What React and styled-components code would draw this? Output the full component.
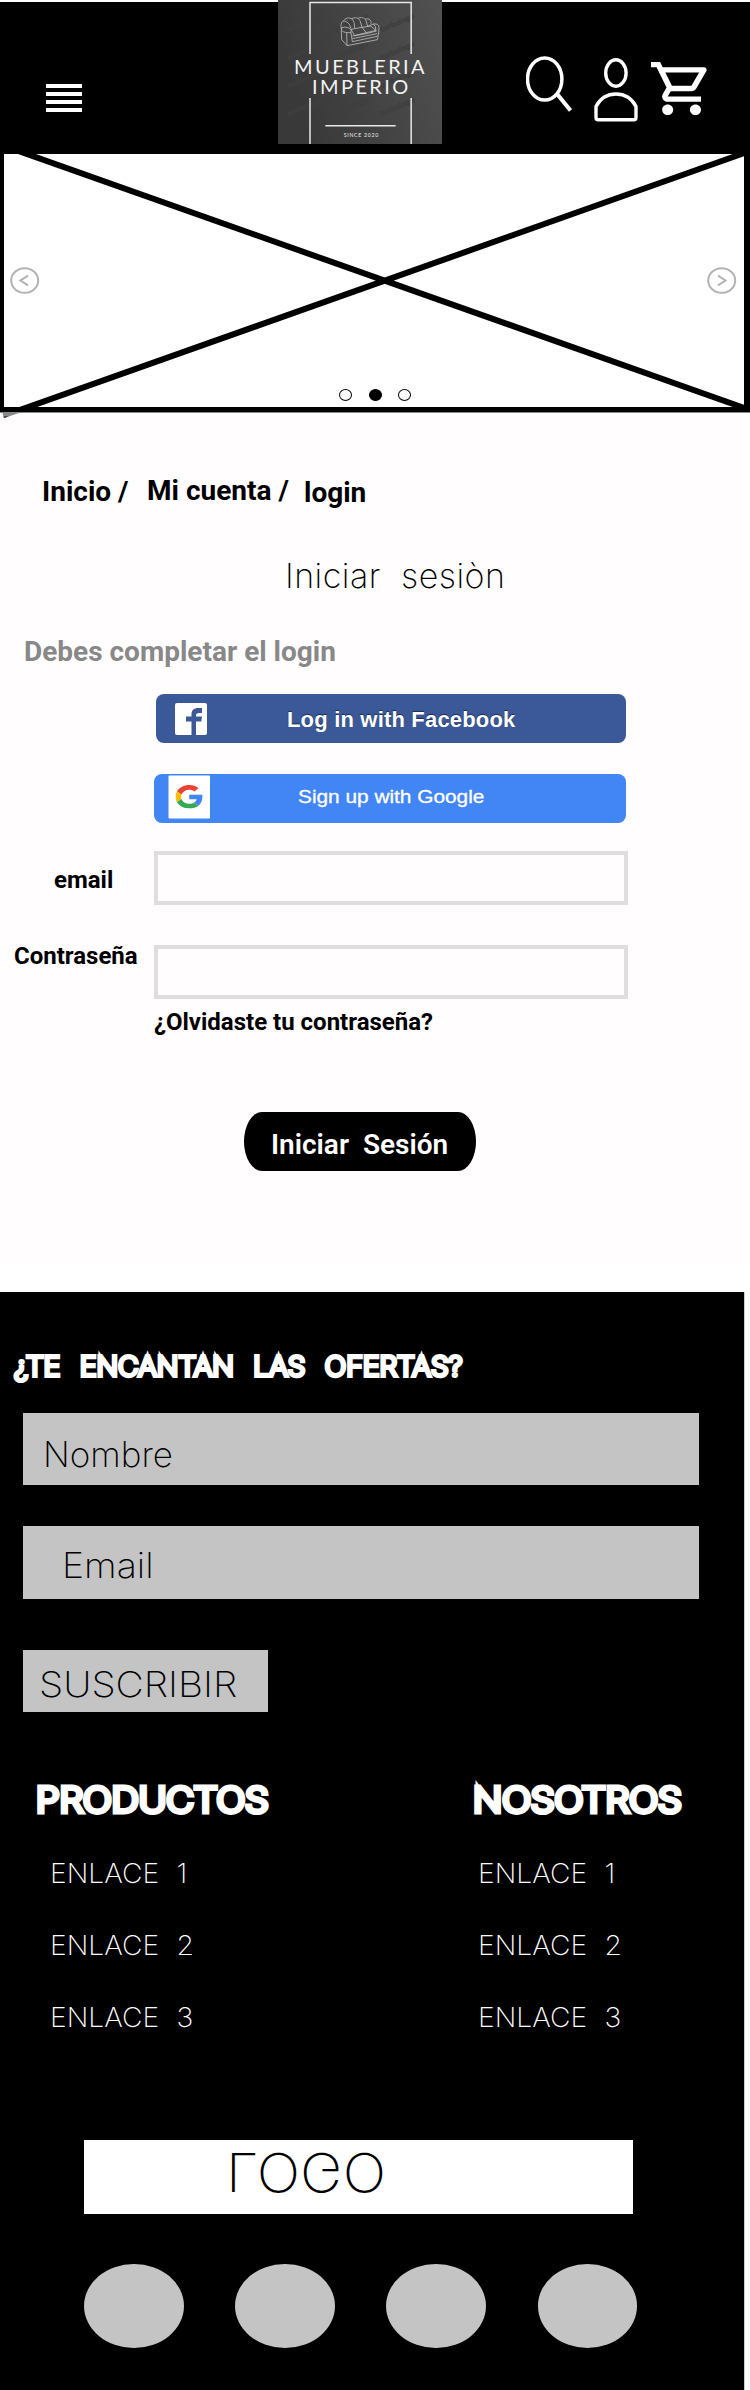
import React from 'react';
import styled, { createGlobalStyle } from 'styled-components';

const GlobalStyle = createGlobalStyle`
  * { box-sizing: border-box; }
  body { margin: 0; background: #fff; }
  button, input { font: inherit; }
`;

const thin = `font-family: Inter, "Liberation Sans", sans-serif; font-weight: 200;`;
const bold = `font-family: Roboto, "Liberation Sans", sans-serif; font-weight: 700;`;

const Page = styled.div`
  width: 750px;
  height: 2390px;
  overflow: hidden;
  color: #000;
  white-space: pre;
`;

/* ---------- header ---------- */
const Header = styled.header`
  display: flex;
  align-items: flex-start;
  height: 154px;
  padding-left: 46px;
  background: linear-gradient(#fff 2px, #000 2px);
`;
const MenuButton = styled.div`
  display: flex;
  flex-direction: column;
  gap: 4px;
  width: 36px;
  margin: 84px 196px 0 0;
`;
const MenuBar = styled.span`
  height: 4px;
  background: #fff;
`;
const Brand = styled.div`
  width: 164px;
  height: 144px;
  margin-right: 84px;
  svg { display: block; }
`;
const Actions = styled.div`
  display: flex;
  align-items: flex-start;
`;
const ActionIcon = styled.svg`
  display: block;
  margin-top: ${(p) => p.$top}px;
  margin-right: ${(p) => p.$gap || 0}px;
`;

/* ---------- carousel ---------- */
const Carousel = styled.section`
  position: relative;
  display: flex;
  flex-direction: column;
  height: 258px;
  border: solid #000;
  border-width: 0 6px 5px 4px;
  background: #fff;
`;
const Cross = styled.svg`
  position: absolute;
  inset: 0;
`;
const CornerShade = styled.svg`
  position: absolute;
  left: -2px;
  top: 259px;
`;
const Arrows = styled.div`
  position: relative;
  display: flex;
  justify-content: space-between;
  padding: 113px 7px 0 6px;
  svg { display: block; }
`;
const Dots = styled.div`
  position: relative;
  display: flex;
  justify-content: center;
  gap: 16.5px;
  padding: 95px 0 0 2px;
`;
const Dot = styled.span`
  width: 13px;
  height: 12px;
  border: 1px solid #000;
  border-radius: 50%;
  background: ${(p) => (p.$active ? '#000' : '#fff')};
`;

/* ---------- login ---------- */
const Main = styled.main`
  height: 850px;
  padding-top: 63px;
  border-top: 1px solid #888;
  background: #fffdfe;
  ${bold}
`;
const Breadcrumb = styled.nav`
  display: grid;
  grid-template-columns: 105px 157px auto;
  padding-left: 42px;
  font-size: 28px;
  line-height: 32px;
`;
const Crumb = styled.span`
  transform: translateY(${(p) => p.$shift || 0}px);
`;
const Title = styled.h1`
  ${thin}
  margin: 48px 0 0 285px;
  font-size: 34px;
  line-height: 40px;
  letter-spacing: 0.5px;
`;
const Hint = styled.p`
  margin: 40px 0 0 24px;
  color: #888;
  font-size: 28px;
  line-height: 32px;
`;
const SocialButton = styled.div`
  display: flex;
  width: ${(p) => (p.$google ? 472 : 470)}px;
  height: 49px;
  margin: ${(p) => (p.$google ? '31px 0 0 154px' : '26px 0 0 156px')};
  padding-left: ${(p) => (p.$google ? 14 : 19)}px;
  border-radius: 8px;
  background: ${(p) => (p.$google ? '#4285f4' : '#3b5998')};
  color: #fff;
  line-height: 49px;
  svg { display: block; flex: none; }
`;
const FacebookLabel = styled.span`
  margin: 1px 0 0 80px;
  font: 700 22px/49px "Liberation Sans", sans-serif;
  letter-spacing: 0.18px;
  text-shadow: 0 -1px 1px #1d2c50;
`;
const GoogleLabel = styled.span`
  margin: -1px 0 0 87px;
  font: 400 17.5px/49px "Liberation Sans", sans-serif;
  transform: scaleX(1.19);
  transform-origin: left;
  -webkit-text-stroke: 0.3px #fff;
`;
const Field = styled.label`
  display: grid;
  grid-template-columns: 154px 474px;
  margin-top: ${(p) => p.$gap}px;
  font-size: 24px;
  line-height: 28px;
`;
const FieldName = styled.span`
  padding-left: ${(p) => p.$indent}px;
  transform: translateY(${(p) => p.$shift}px);
`;
const FieldInput = styled.input`
  width: 474px;
  height: 54px;
  border: 4px solid #dedede;
  background: #fffdfe;
`;
const Forgot = styled.p`
  margin: 9px 0 0 154px;
  font-size: 24px;
  line-height: 28px;
`;
const Submit = styled.div`
  width: 232px;
  height: 59px;
  margin: 76px 0 0 244px;
  padding: 3px 0 0 27px;
  border-radius: 18px / 29.5px;
  background: #000;
  color: #fff;
  font-size: 28px;
  font-weight: 600;
  line-height: 59px;
`;

/* ---------- footer ---------- */
const Footer = styled.footer`
  ${thin}
  width: 745px;
  height: 1098px;
  margin-top: 30px;
  padding-top: 55px;
  border-right: 1px solid #ccc;
  background: #000;
  color: #fff;
`;
const Wide = styled.span`
  display: inline-block;
  transform: scaleX(${(p) => p.$by});
  transform-origin: left;
`;
const OffersTitle = styled.h2`
  margin: 0 0 26px 14px;
  font-size: 27px;
  font-weight: 200;
  line-height: 40px;
  word-spacing: 1.7px;
  -webkit-text-stroke: 4px #fff;
`;
const GreyBox = styled.div`
  width: ${(p) => p.$width}px;
  height: ${(p) => p.$height}px;
  margin: 0 0 ${(p) => p.$after}px 22.5px;
  padding: ${(p) => p.$pad};
  background: #c4c4c4;
  color: #000;
  font-size: 35px;
  line-height: ${(p) => p.$height}px;
`;
const Columns = styled.div`
  display: grid;
  grid-template-columns: 437px auto;
  padding-left: 36px;
`;
const ColumnTitle = styled.h3`
  margin: 0 0 15.5px;
  font-size: 34px;
  font-weight: 200;
  line-height: 44px;
  -webkit-text-stroke: 5px #fff;
`;
const FooterLink = styled.div`
  padding-left: ${(p) => p.$indent}px;
  font-size: 27px;
  line-height: 72px;
  word-spacing: 0.8px;
`;
const LogoBox = styled.div`
  width: 549px;
  height: 73.5px;
  margin: 86.5px 0 50.5px 84px;
  padding-left: 142px;
  background: #fff;
  color: #000;
`;
const FlippedText = styled.div`
  width: 200px;
  font-size: 54px;
  line-height: 73.5px;
  transform: translateY(-4.5px) scale(1.065, -1);
  transform-origin: left;
`;
const Circles = styled.div`
  display: flex;
  gap: 51.7px;
  padding-left: 84px;
`;
const Circle = styled.span`
  width: 99.5px;
  height: 84px;
  border-radius: 50%;
  background: #c4c4c4;
`;

const marks = [];
for (let row = 0; row < 4; row += 1) {
  for (let col = 0; col < 3; col += 1) marks.push([56 + col * 139, 92 + row * 84]);
}

const BrandLogo = () => (
  <svg width="164" height="144" viewBox="24 0 492 432">
    <defs>
      <linearGradient id="slate" x1="0" y1="0.3" x2="1" y2="0">
        <stop offset="0" stopColor="#393939" />
        <stop offset="1" stopColor="#515151" />
      </linearGradient>
    </defs>
    <rect x="24" width="492" height="432" fill="url(#slate)" />
    <g fill="#464646" stroke="#3c3c3c" strokeWidth="1.5" fontFamily="DejaVu Sans" fontWeight="700" fontSize="20">
      {marks.map(([x, y]) => (
        <text key={`${x}-${y}`} transform={`translate(${x} ${y + 5}) rotate(-24)`} textLength="110">turbologo</text>
      ))}
    </g>
    <g fill="none" stroke="#e8e8e8" strokeWidth="4.5">
      <path d="M120 162V7.500H423.500V162M120 294V432M423.500 294V432M166 377H377" />
    </g>
    <g fill="none" stroke="#c9c9c9" strokeWidth="2.200" strokeLinejoin="round">
      <path d="M214 91L215 119L231 137L322 119L326 99M214 91Q213 80 224 81L238 84Q246 89 243 98L230 98Q218 96 214 91M230 98L231 137M243 98L247 125L322 109M247 116L321 101M247 108L288 101L320 93" />
      <path d="M214 88C210 65 219 58 232 67Q239 71 243 85M221 62C229 50 243 53 249 60Q254 67 254 84M245 56C257 50 267 55 270 62L276 82M265 54C278 50 287 56 288 62L293 79M286 57C298 54 305 62 303 71M293 79L310 72Q327 70 327 82L326 100M310 72Q318 77 318 91M243 88L276 82L289 98L254 107ZM276 82L302 78L318 91L289 98" />
    </g>
    <g fill="#f2f2f2" fontFamily="Lato" textAnchor="start">
      <text x="72" y="221" fontSize="60" textLength="392">MUEBLERIA</text>
      <text x="126" y="283" fontSize="60" textLength="289">IMPERIO</text>
      <text x="221" y="411" fontSize="15.500" textLength="104">SINCE 2020</text>
    </g>
  </svg>
);

const ArrowIcon = ({ flip }) => (
  <svg width="30" height="27" viewBox="0 0 30 27" fill="none" stroke="#b3b3b3" strokeWidth="2">
    <ellipse cx="14.700" cy="13.500" rx="13.500" ry="12.300" />
    <path d={flip ? 'M11 8.700L18.500 13.500L11 18.300' : 'M18 8.700L10.500 13.500L18 18.300'} />
  </svg>
);

export default function App() {
  return (
    <Page>
      <GlobalStyle />
      <Header>
        <MenuButton>
          <MenuBar /><MenuBar /><MenuBar /><MenuBar />
        </MenuButton>
        <Brand><BrandLogo /></Brand>
        <Actions>
          <ActionIcon $top={55} $gap={21} width="47" height="58" viewBox="526 55 47 58" fill="none" stroke="#fff">
            <ellipse cx="544.700" cy="79" rx="17.200" ry="21.100" strokeWidth="3.500" />
            <path d="M557.500 94.500L570.500 110.500" strokeWidth="4" />
          </ActionIcon>
          <ActionIcon $top={57} $gap={13} width="44" height="66" viewBox="594 57 44 66" fill="none" stroke="#fff" strokeWidth="3.400">
            <ellipse cx="615.900" cy="73" rx="10.200" ry="13.200" />
            <path d="M596 106.500C600 99 607 94 616 94S632 99 636 106.500V117.500Q636 119.800 633.800 119.800H598.200Q596 119.800 596 117.500Z" />
          </ActionIcon>
          <ActionIcon $top={62} width="56" height="53" viewBox="1 2 20.150 20" preserveAspectRatio="none" fill="#fff">
            <path d="M15.550 13c.75 0 1.410-.41 1.750-1.030l3.580-6.490A.996.996 0 0 0 20.010 4H5.210l-.94-2H1v2h2l3.600 7.590-1.350 2.440C4.520 15.370 5.480 17 7 17h12v-2H7l1.100-2h7.450zM6.160 6h12.150l-2.760 5H8.530L6.160 6zM7 18c-1.100 0-1.990.9-1.990 2S5.900 22 7 22s2-.9 2-2-.9-2-2-2zm10 0c-1.100 0-1.990.9-1.990 2s.89 2 1.990 2 2-.9 2-2-.9-2-2-2z" />
          </ActionIcon>
        </Actions>
      </Header>

      <Carousel>
        <Cross width="740" height="253" viewBox="4 154 740 253" stroke="#000" strokeWidth="6">
          <path d="M10 148L760 413.500M10 413.500L760 147.500" />
        </Cross>
        <CornerShade width="18" height="6" viewBox="0 0 18 6">
          <path d="M0.500 0H17L2 5Z" fill="#888" />
          <path d="M1.500 3L7 3.500L2 5.200Z" fill="#444" />
        </CornerShade>
        <Arrows>
          <ArrowIcon />
          <ArrowIcon flip />
        </Arrows>
        <Dots>
          <Dot /><Dot $active /><Dot />
        </Dots>
      </Carousel>

      <Main>
        <Breadcrumb>
          <Crumb>Inicio /</Crumb>
          <Crumb $shift={-1}>Mi cuenta /</Crumb>
          <Crumb $shift={1}>login</Crumb>
        </Breadcrumb>
        <Title>Iniciar  sesiòn</Title>
        <Hint>Debes completar el login</Hint>
        <SocialButton>
          <svg width="32" height="49" viewBox="0 0 32 49">
            <rect y="9" width="32" height="32" rx="2" fill="#fff" />
            <path d="M16.500 41V27.500H11V22.500H16.500V20C16.500 16 19.500 14 23 14H27V19H24Q21 19 21 21.500V22.500H27L26.300 27.500H21V41Z" fill="#3b5998" />
          </svg>
          <FacebookLabel>Log in with Facebook</FacebookLabel>
        </SocialButton>
        <SocialButton $google>
          <svg width="43" height="49" viewBox="0 0 43 49">
            <rect x="0.500" y="1.500" width="41.500" height="43" rx="1" fill="#fff" />
            <svg x="7.500" y="11" width="27.500" height="23.500" viewBox="0 0 48 48" preserveAspectRatio="none">
              <path fill="#EA4335" d="M24 9.500c3.540 0 6.710 1.220 9.210 3.600l6.850-6.850C35.900 2.380 30.470 0 24 0 14.620 0 6.510 5.380 2.560 13.220l7.980 6.190C12.430 13.720 17.740 9.500 24 9.500z" />
              <path fill="#4285F4" d="M46.980 24.550c0-1.570-.15-3.090-.38-4.550H24v9.020h12.940c-.58 2.960-2.260 5.480-4.780 7.180l7.730 6c4.510-4.180 7.090-10.360 7.090-17.650z" />
              <path fill="#FBBC05" d="M10.530 28.590c-.48-1.450-.76-2.990-.76-4.590s.27-3.140.76-4.590l-7.980-6.190C.92 16.460 0 20.120 0 24c0 3.880.92 7.540 2.560 10.780l7.970-6.190z" />
              <path fill="#34A853" d="M24 48c6.480 0 11.930-2.130 15.890-5.810l-7.730-6c-2.150 1.450-4.920 2.300-8.160 2.300-6.260 0-11.570-4.220-13.470-9.910l-7.980 6.190C6.510 42.620 14.620 48 24 48z" />
            </svg>
          </svg>
          <GoogleLabel>Sign up with Google</GoogleLabel>
        </SocialButton>
        <Field $gap={28}>
          <FieldName $indent={54} $shift={15}>email</FieldName>
          <FieldInput type="email" />
        </Field>
        <Field $gap={40}>
          <FieldName $indent={14} $shift={-3}>Contraseña</FieldName>
          <FieldInput type="password" />
        </Field>
        <Forgot>¿Olvidaste tu contraseña?</Forgot>
        <Submit>Iniciar  Sesión</Submit>
      </Main>

      <Footer>
        <OffersTitle><Wide $by={1.047}>¿TE  ENCANTAN  LAS  OFERTAS?</Wide></OffersTitle>
        <GreyBox $width={676} $height={72} $after={41} $pad="5px 0 0 20.5px">Nombre</GreyBox>
        <GreyBox $width={676} $height={73} $after={50.5} $pad="3px 0 0 39.5px"><Wide $by={1.07}>Email</Wide></GreyBox>
        <GreyBox $width={245} $height={62.5} $after={66} $pad="3px 0 0 16px"><Wide $by={1.11}>SUSCRIBIR</Wide></GreyBox>
        <Columns>
          <div>
            <ColumnTitle><Wide $by={1.115}>PRODUCTOS</Wide></ColumnTitle>
            {[1, 2, 3].map((n) => <FooterLink key={n} $indent={14}><Wide $by={1.045}>{`ENLACE  ${n}`}</Wide></FooterLink>)}
          </div>
          <div>
            <ColumnTitle><Wide $by={1.12}>NOSOTROS</Wide></ColumnTitle>
            {[1, 2, 3].map((n) => <FooterLink key={n} $indent={5}><Wide $by={1.045}>{`ENLACE  ${n}`}</Wide></FooterLink>)}
          </div>
        </Columns>
        <LogoBox><FlippedText>LOGO</FlippedText></LogoBox>
        <Circles>
          <Circle /><Circle /><Circle /><Circle />
        </Circles>
      </Footer>
    </Page>
  );
}
